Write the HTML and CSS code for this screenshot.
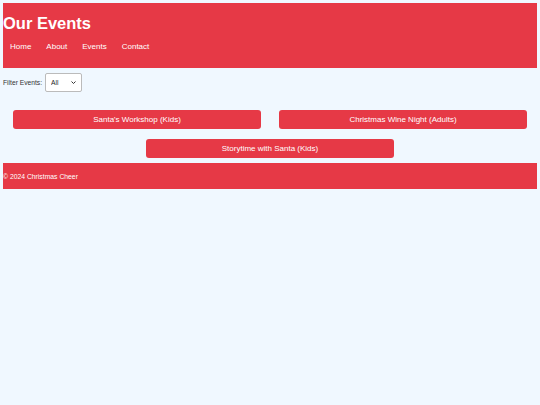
FILE: index.html
```html
<!DOCTYPE html>
<html lang="en">
<head>
    <meta charset="UTF-8">
    <meta name="viewport" content="width=device-width, initial-scale=1.0">
    <title>Our Events</title>
    <link rel="stylesheet" href="styles.css">
</head>
<body>
    <header class="site-header">
        <h1>Our Events</h1>
        <nav>
            <ul class="nav-list">
                <li><a href="#">Home</a></li>
                <li><a href="#">About</a></li>
                <li><a href="#">Events</a></li>
                <li><a href="#">Contact</a></li>
            </ul>
        </nav>
    </header>
    <div class="filter-row">
        <label for="eventFilter">Filter Events:</label>
        <span class="select-wrap">
            <select id="eventFilter">
                <option value="all">All</option>
                <option value="kids">Kids</option>
                <option value="adults">Adults</option>
            </select>
            <svg class="select-arrow" width="5" height="3" viewBox="0 0 5 3">
                <path d="M0.5 0.5 L2.5 2.5 L4.5 0.5" fill="none" stroke="#333" stroke-width="1"/>
            </svg>
        </span>
    </div>
    <div class="event-list">
        <button class="event-btn">Santa's Workshop (Kids)</button>
        <button class="event-btn">Christmas Wine Night (Adults)</button>
        <button class="event-btn">Storytime with Santa (Kids)</button>
    </div>
    <footer class="site-footer">
        <p>&copy; 2024 Christmas Cheer</p>
    </footer>
</body>
</html>
```

FILE: styles.css
```css
body {
    font-family: "Liberation Sans", Arial, sans-serif;
    font-size: 8px;
    margin: 3px;
    background-color: #f0f8ff;
    color: #333;
}
.site-header {
    background-color: #e63946;
    color: white;
    padding: 11px 0 17px;
}
.site-header h1 {
    font-size: 16.5px;
    margin: 0 0 9px;
}
.nav-list {
    list-style: none;
    display: flex;
    gap: 15px;
    margin: 0;
    padding: 0 0 0 7px;
}
.nav-list a {
    color: white;
    text-decoration: none;
}
.filter-row {
    display: flex;
    align-items: center;
    gap: 3px;
    margin-top: 5px;
    font-size: 6.7px;
}
.select-wrap {
    position: relative;
    display: inline-flex;
}
.select-wrap select {
    appearance: none;
    width: 37px;
    height: 19px;
    font-family: "Liberation Sans", Arial, sans-serif;
    font-size: 6.7px;
    color: #222;
    padding: 0 0 0 5px;
    border: 1px solid #bbb;
    border-radius: 2px;
    background-color: white;
}
.select-arrow {
    position: absolute;
    right: 6px;
    top: 8px;
    pointer-events: none;
}
.event-list {
    display: flex;
    flex-wrap: wrap;
    justify-content: center;
    column-gap: 18px;
    row-gap: 10px;
    margin-top: 18px;
}
.event-btn {
    width: 248px;
    height: 19px;
    background-color: #e63946;
    color: white;
    border: none;
    border-radius: 3px;
    font-family: "Liberation Sans", Arial, sans-serif;
    font-size: 8px;
    cursor: pointer;
}
.site-footer {
    background-color: #e63946;
    color: white;
    margin-top: 5px;
    height: 26px;
    display: flex;
    align-items: center;
    font-size: 6.8px;
}
.site-footer p {
    margin: 0;
}
```
